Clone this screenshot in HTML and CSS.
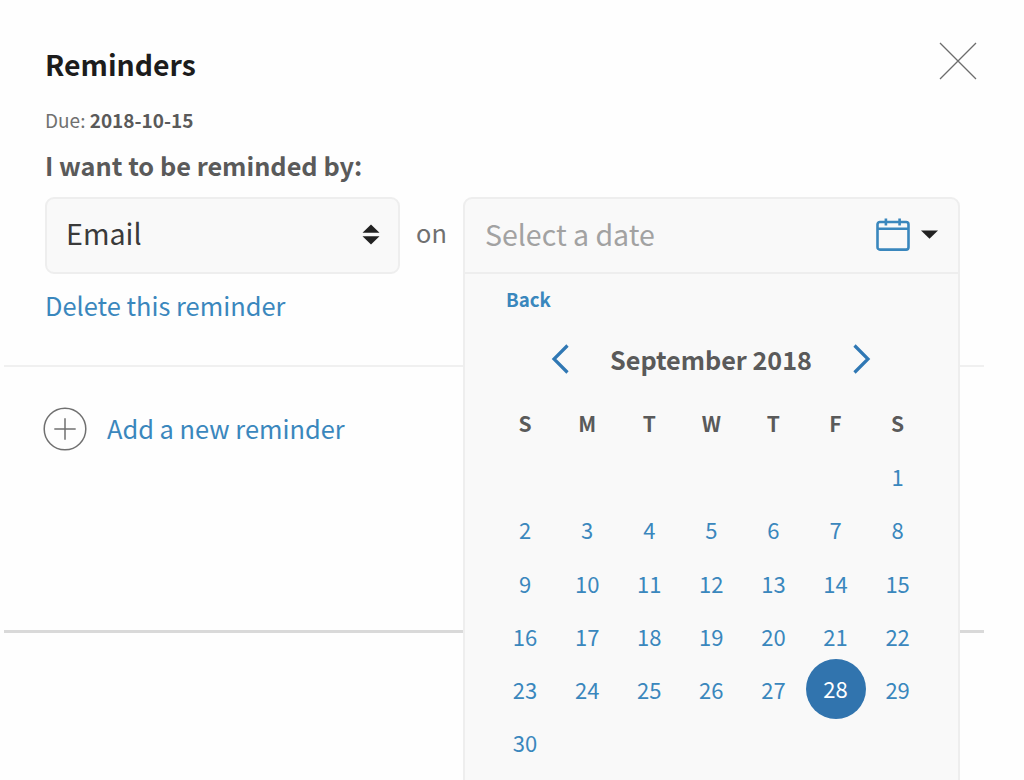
FILE: index.html
```
<!DOCTYPE html>
<html lang="en">
<head>
    <meta charset="UTF-8">
    <meta name="viewport" content="width=device-width, initial-scale=1.0">
    <title>Reminders</title>
    <link rel="stylesheet" href="styles.css">
</head>
<body>
    <div class="reminders-panel">
        <section class="reminder">
            <header class="panel-header">
                <h1>Reminders</h1>
                <button class="close-button" aria-label="Close">
                    <svg width="38" height="38" viewBox="0 0 38 38">
                        <path d="M1 1L37 37M37 1L1 37"/>
                    </svg>
                </button>
            </header>

            <p class="due">Due: <strong>2018-10-15</strong></p>
            <h2>I want to be reminded by:</h2>

            <div class="field-row">
                <div class="select-field">
                    <span class="select-value">Email</span>
                    <svg class="select-arrows" width="18" height="21" viewBox="0 0 18 21">
                        <path d="M9 0.5L17.5 8.7H0.5ZM0.5 12.3H17.5L9 20.5Z"/>
                    </svg>
                </div>
                <span class="on">on</span>

                <div class="date-picker">
                    <div class="date-input">
                        <span class="placeholder">Select a date</span>
                        <svg class="calendar-icon" width="34" height="34" viewBox="0 0 34 34">
                            <rect x="1.5" y="4" width="31" height="27.6" rx="2.4"/>
                            <path d="M1.5 10.8H32.5M9.9 0.6V7.6M23.6 0.6V7.6"/>
                        </svg>
                        <svg class="caret" width="17" height="9" viewBox="0 0 17 9">
                            <path d="M0 0.5H17L8.5 8.7Z"/>
                        </svg>
                    </div>

                    <div class="calendar">
                        <a href="#" class="back">Back</a>
                        <div class="month">
                            <svg class="chevron" width="18" height="30" viewBox="0 0 18 30">
                                <path d="M16.5 1.5L3 15L16.5 28.5"/>
                            </svg>
                            <h3>September 2018</h3>
                            <svg class="chevron" width="18" height="30" viewBox="0 0 18 30">
                                <path d="M1.5 1.5L15 15L1.5 28.5"/>
                            </svg>
                        </div>
                        <div class="days">
                            <b>S</b><b>M</b><b>T</b><b>W</b><b>T</b><b>F</b><b>S</b>
                            <span class="first-day">1</span>
                            <span>2</span><span>3</span><span>4</span><span>5</span><span>6</span><span>7</span><span>8</span>
                            <span>9</span><span>10</span><span>11</span><span>12</span><span>13</span><span>14</span><span>15</span>
                            <span>16</span><span>17</span><span>18</span><span>19</span><span>20</span><span>21</span><span>22</span>
                            <span>23</span><span>24</span><span>25</span><span>26</span><span>27</span><span class="selected">28</span><span>29</span>
                            <span>30</span>
                        </div>
                    </div>
                </div>
            </div>

            <a href="#" class="delete-link">Delete this reminder</a>
        </section>

        <section class="add-reminder">
            <svg class="plus-icon" width="44" height="44" viewBox="0 0 44 44">
                <circle cx="22" cy="22" r="20.8"/>
                <path d="M11.3 22H32.7M22 11.3V32.7"/>
            </svg>
            <a href="#">Add a new reminder</a>
        </section>
    </div>
</body>
</html>
```
FILE: styles.css
```
* {
    margin: 0;
    padding: 0;
    box-sizing: border-box;
}

body {
    font-family: "Noto Sans CJK SC", "Noto Sans", sans-serif;
    background: #fefefe;
    color: #5a5a5a;
    height: 780px;
    overflow: hidden;
}

a {
    color: #3a87bd;
    text-decoration: none;
}

svg {
    display: block;
    flex: none;
}

.reminders-panel {
    width: 980px;
    height: 633px;
    margin-left: 4px;
    border-bottom: 3px solid #d9d9d9;
}

.reminder {
    height: 367px;
    padding: 42px 7px 0 41px;
    border-bottom: 2px solid #f0f0f0;
}

.panel-header {
    display: flex;
    justify-content: space-between;
    height: 64px;
}

h1 {
    font-size: 28.4px;
    line-height: 44px;
    color: #1c1c1c;
}

.close-button {
    width: 38px;
    height: 38px;
    border: none;
    background: none;
}

.close-button path {
    fill: none;
    stroke: #6c6c6c;
    stroke-width: 1.3;
}

.due {
    font-size: 19px;
    line-height: 28px;
    color: #707070;
}

.due strong {
    color: #5a5a5a;
}

h2 {
    margin: 13px 0 14px;
    font-size: 25.3px;
    line-height: 36px;
}

.field-row {
    display: flex;
    align-items: center;
    height: 77px;
}

.select-field {
    display: flex;
    align-items: center;
    justify-content: space-between;
    width: 355px;
    height: 77px;
    padding: 0 18px 3px 19px;
    background: #f9f9f9;
    border: 2px solid #eeeeee;
    border-radius: 9px;
}

.select-value {
    margin-top: -2px;
    font-size: 28.7px;
    line-height: 42px;
    color: #3a3a3a;
}

.select-arrows,
.caret {
    fill: #222222;
}

.on {
    width: 63px;
    padding-bottom: 7px;
    font-size: 25.3px;
    text-align: center;
    color: #707070;
}

/* The open calendar hangs over the rest of the panel */
.date-picker {
    position: relative;
    flex: none;
    width: 497px;
    height: 77px;
}

.date-input {
    display: flex;
    align-items: center;
    height: 77px;
    padding: 0 20px 2px 20px;
    background: #f9f9f9;
    border: 2px solid #eeeeee;
    border-radius: 9px 9px 0 0;
}

.placeholder {
    flex: 1;
    margin-top: -2px;
    font-size: 28.5px;
    line-height: 42px;
    color: #a2a2a2;
}

.calendar-icon {
    margin-right: 11px;
    fill: none;
    stroke: #3a87bd;
    stroke-width: 2.6;
}

.calendar {
    position: absolute;
    top: 77px;
    left: 0;
    width: 497px;
    height: 540px;
    padding: 11px 28px 0 29px;
    background: #f9f9f9;
    border: 2px solid #eeeeee;
    border-top: none;
}

.back {
    display: block;
    padding-left: 12px;
    font-size: 18.7px;
    font-weight: 700;
    line-height: 28px;
}

.month {
    display: flex;
    align-items: center;
    justify-content: space-between;
    width: 320px;
    height: 40px;
    margin: 26px 0 17px 57px;
}

.chevron {
    fill: none;
    stroke: #3078b4;
    stroke-width: 3.2;
}

h3 {
    font-size: 25.2px;
    line-height: 40px;
}

.days {
    display: grid;
    grid-template-columns: repeat(7, 62.1px);
    grid-auto-rows: 53.3px;
    align-items: center;
    justify-items: center;
    font-size: 22px;
    line-height: 30px;
}

.days b {
    font-size: 21px;
}

.days span {
    color: #3a87bd;
}

.days .first-day {
    grid-column: 7;
}

.days .selected {
    width: 60px;
    height: 60px;
    margin: -4px 0;
    line-height: 59px;
    text-align: center;
    color: #ffffff;
    background: #3174ae;
    border-radius: 50%;
}

.delete-link {
    display: block;
    margin-top: 13px;
    font-size: 25.4px;
    line-height: 36px;
}

.add-reminder {
    display: flex;
    align-items: center;
    gap: 20px;
    height: 124px;
    padding-left: 39px;
    font-size: 25.4px;
    line-height: 36px;
}

.add-reminder a {
    padding-bottom: 2px;
}

.plus-icon {
    fill: none;
    stroke: #707070;
    stroke-width: 1.5;
}
```
